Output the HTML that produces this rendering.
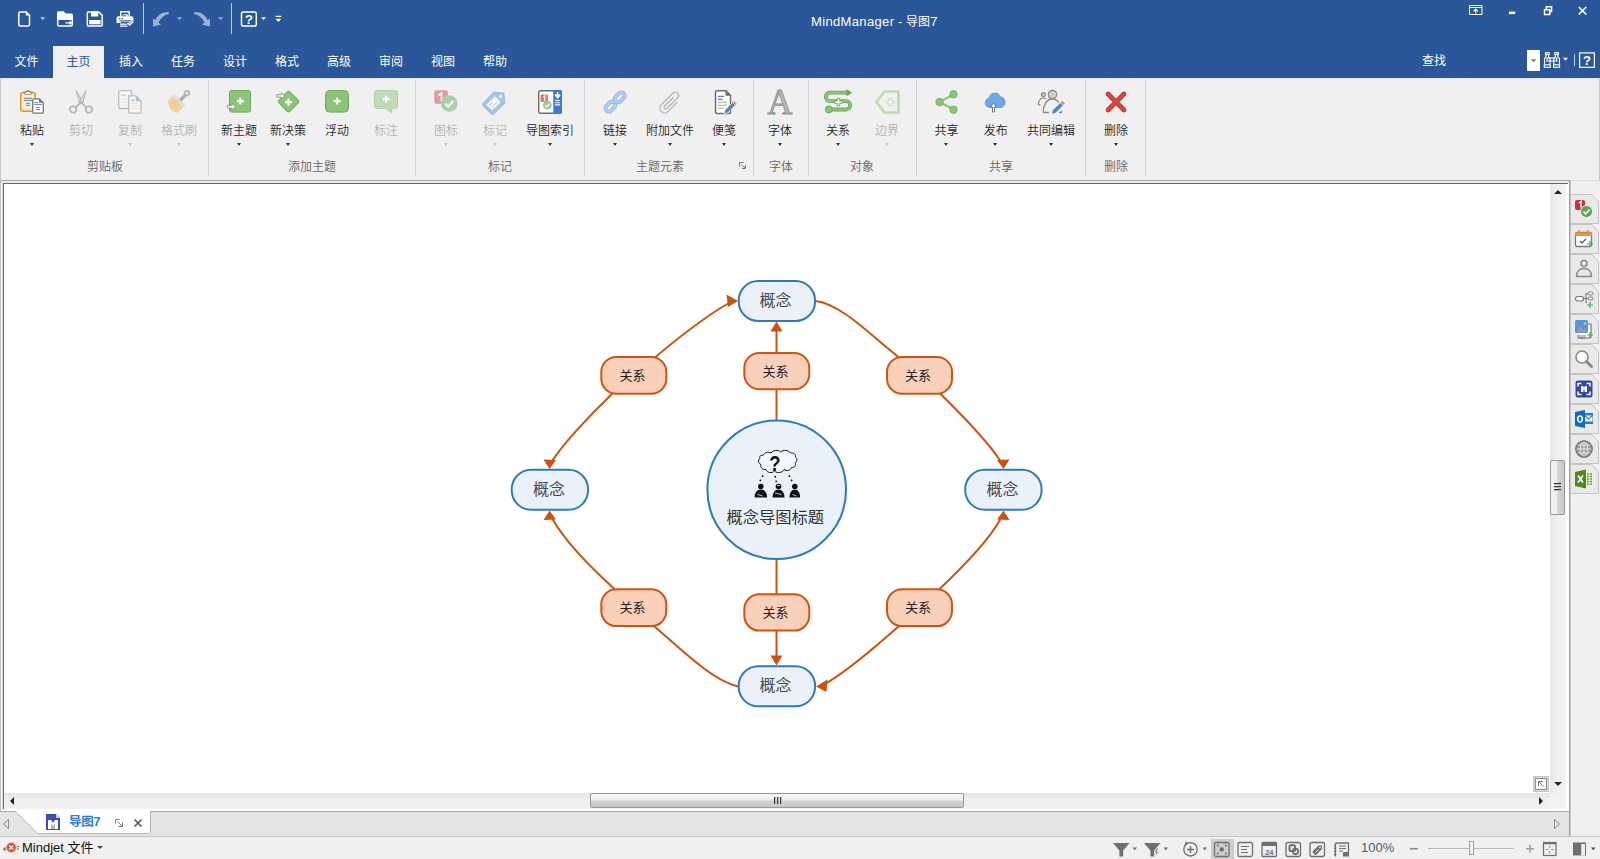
<!DOCTYPE html>
<html lang="zh-CN">
<head>
<meta charset="utf-8">
<title>MindManager - 导图7</title>
<style>
*{box-sizing:border-box;margin:0;padding:0}
html,body{width:1600px;height:859px;overflow:hidden;background:#f0f0f0}
body{font-family:"Liberation Sans","Noto Sans CJK SC",sans-serif;font-size:12px;color:#262626;position:relative}
.abs{position:absolute}
#titlebar{position:absolute;left:0;top:0;width:1600px;height:78px;background:#2b579a}
#apptitle{position:absolute;left:811px;top:12.700px;color:#fff;font-size:13px;line-height:18px;white-space:nowrap}
.tab{position:absolute;top:46px;height:32px;line-height:33px;color:#fff;font-size:12px;text-align:center;white-space:nowrap}
.tab.active{background:#f0f0f0;color:#2b579a}
#ribbon{position:absolute;left:0;top:78px;width:1600px;height:102px;background:#f0f0f0}
.rb{position:absolute;top:0;width:60px;margin-left:-30px;text-align:center;height:80px}
.rb .ic{position:absolute;left:50%;top:12px;margin-left:-12px;width:24px;height:24px}
.rb .lb{font-weight:350;position:absolute;left:-20px;right:-20px;top:43.500px;line-height:18px;font-size:12px;color:#262626;white-space:nowrap}
.rb .dd{position:absolute;left:50%;top:65px;margin-left:-2.500px;width:0;height:0;border-left:2.500px solid transparent;border-right:2.500px solid transparent;border-top:3px solid #333}
.rb.dis .lb{color:#b4b4b4}
.rb.dis .dd{border-top-color:#c4c4c4}
.gl{font-weight:350;position:absolute;top:79.500px;line-height:18px;font-size:12px;color:#666;text-align:center;width:100px;margin-left:-50px;white-space:nowrap}
.gs{position:absolute;top:2px;width:1px;height:96px;background:#d0d0d0}
#canvas{position:absolute;left:4px;top:184px;width:1546px;height:609px;background:#fff}
svg{display:block;overflow:visible}
.sbtab{position:absolute;left:1570px;width:30px;height:30px}
</style>
</head>
<body>
<!-- TITLE BAR -->
<div id="titlebar">
  <svg id="qat" class="abs" style="left:0;top:0" width="300" height="40" viewBox="0 0 300 40">
    <g fill="none" stroke="#fff" stroke-width="1.500" stroke-linejoin="round">
      <!-- new -->
      <path d="M20.300 12h6l3.200 3.200V24.500a1.500 1.500 0 0 1-1.500 1.500H20.300a1.500 1.500 0 0 1-1.500-1.500V13.500a1.500 1.500 0 0 1 1.500-1.500z"/>
      <!-- open -->
      <path d="M57.700 19.300h14.600V24.500a1.500 1.500 0 0 1-1.500 1.500H59.200a1.500 1.500 0 0 1-1.500-1.500z"/>
      <!-- save -->
      <path d="M88.300 12h10.500l3.400 3.400V25a1 1 0 0 1-1 1H88.300a1 1 0 0 1-1-1V13a1 1 0 0 1 1-1z"/>
      <!-- help box -->
      <rect x="241.500" y="12" width="14.800" height="14" rx="1.800"/>
    </g>
    <g fill="#fff">
      <path d="M25.800 11.600l4 4h-4z"/>
      <path d="M57 12.700a1.500 1.500 0 0 1 1.500-1.500h5.300l1.700 2.300h6a1.500 1.500 0 0 1 1.500 1.500v4.300H57z"/>
      <path d="M65.500 22.200h4v-1.700l2.800 2.400-2.800 2.400v-1.700h-4z"/>
      <rect x="91" y="11.500" width="7.300" height="5"/>
      <rect x="89.200" y="20" width="11.400" height="4.300"/>
      <!-- printer -->
      <path d="M120 16.500V12a1 1 0 0 1 1-1h8a1 1 0 0 1 1 1v4.500h-1.500V12.500h-7v4z"/>
      <path d="M122.500 15.800c1-2 3-2.500 4.500-1l.8-.8v2.500h-2.500l.8-.8c-1-1-2.200-.8-3 .4z"/>
      <path d="M118.500 16.300h13a2 2 0 0 1 2 2V23h-4.300v-1.200h-8.400V23h-4.300v-4.700a2 2 0 0 1 2-2zM119 18v1.200h1.500V18zm2.500 0v1.200h1.500V18z" fill-rule="evenodd"/>
      <path d="M119.500 20.300h11.500v1h-11.500z" fill="#2b579a"/>
      <path d="M120 23.600h8v1.200h-8zM120 25.600h7.500v1.200H120z"/>
      <path d="M126.800 23.500l1.400-1.400 1.500 1.500 2.800-2.800 1.400 1.400-4.200 4.200z" stroke="#2b579a" stroke-width=".7"/>
      <!-- help ? -->
      <text x="248.900" y="24.300" font-size="13.500" font-weight="bold" text-anchor="middle" font-family="'Liberation Sans',sans-serif">?</text>
      <path d="M261 17.200h5l-2.500 2.900z"/>
      <path d="M275.600 15.700h5.600v1.400h-5.600zM275.600 18.800h5.600l-2.800 3.200z"/>
    </g>
    <g fill="#c3d3ee"><path d="M40.200 17.200h5l-2.500 2.900z"/></g>
    <path d="M143.500 3v31M231.500 3v31" stroke="#b8c9e6" stroke-width="1"/>
    <!-- undo / redo (disabled) -->
    <g fill="#9bb1d8">
      <path d="M153 18.500L153 26.500 161 24.800 158.500 22.500C160.500 18 164 15 169 14L168.500 12C161.500 12 157.500 15.500 155.500 20z"/>
      <path d="M210 18.500L210 26.500 202 24.800 204.500 22.500C202.500 18 199 15 194 14L194.500 12C201.500 12 205.500 15.500 207.500 20z"/>
      <path d="M177 17.200h5l-2.500 2.900z"/><path d="M218.200 17.200h5l-2.500 2.900z"/>
    </g>
  </svg>
  <div id="apptitle"><span style="letter-spacing:.35px">MindManager</span> - <span style="font-size:12px;letter-spacing:.2px;position:relative;top:.8px">导图</span>7</div>
  <svg id="winbtns" class="abs" style="left:1460px;top:0" width="140" height="78" viewBox="1460 0 140 78">
    <g fill="none" stroke="#fff">
      <path d="M1469.500 5.500h12.500v9h-12.500zM1469.500 7.500h12.500" stroke-width="1"/>
      <path d="M1475.700 13.500V9.500M1473.500 11.300l2.200-2.200 2.200 2.200" stroke-width="1.100"/>
      <path d="M1509 12.800h6.200" stroke-width="2.600"/>
      <path d="M1544.500 9.800h5.300v4.700h-5.300zM1546.300 9.500V6.700h5.300v4.800h-1.600" stroke-width="1.400"/>
      <path d="M1578.800 7l7.400 7.400M1586.200 7l-7.400 7.400" stroke-width="1.500"/>
      <!-- binoculars -->
      <g stroke-width="1.100">
        <rect x="1545.500" y="52.700" width="3.600" height="1.800"/><rect x="1554.800" y="52.700" width="3.600" height="1.800"/>
        <path d="M1546 54.500v2.500l-1.500 1.500v6M1548.600 54.500v2.500l1.500 1.500v6M1555.300 54.500v2.500l-1.500 1.500v6M1557.900 54.500v2.500l1.500 1.500v6"/>
        <rect x="1544.300" y="64.800" width="6" height="2.500"/><rect x="1553.600" y="64.800" width="6" height="2.500"/>
        <rect x="1547" y="58" width="9.800" height="3"/>
      </g>
      <path d="M1574.500 54.500v11.500" stroke="#c3d3ee" stroke-width="1"/>
      <rect x="1579.600" y="52.900" width="14.800" height="14.400" stroke-width="1.200"/>
    </g>
    <rect x="1527" y="50" width="13" height="21" fill="#fff"/>
    <path d="M1531 59.300h5.200l-2.600 3z" fill="#777"/>
    <path d="M1563 57.800h5l-2.500 3z" fill="#fff"/>
    <text x="1587" y="64.800" font-size="13" font-weight="bold" fill="#fff" text-anchor="middle" font-family="'Liberation Sans',sans-serif">?</text>
  </svg>
  <div class="tab" style="left:0;width:53px">文件</div>
  <div class="tab active" style="left:53px;width:51px">主页</div>
  <div class="tab" style="left:105px;width:52px">插入</div>
  <div class="tab" style="left:157px;width:52px">任务</div>
  <div class="tab" style="left:209px;width:52px">设计</div>
  <div class="tab" style="left:261px;width:52px">格式</div>
  <div class="tab" style="left:313px;width:52px">高级</div>
  <div class="tab" style="left:365px;width:52px">审阅</div>
  <div class="tab" style="left:417px;width:52px">视图</div>
  <div class="tab" style="left:469px;width:52px">帮助</div>
  <div class="tab" style="left:1408px;width:52px;top:45.300px">查找</div>
</div>
<!-- RIBBON -->
<div id="ribbon">
<div class="abs" style="left:0;top:0;width:1600px;height:1px;background:#dfe6f1"></div><div class="abs" style="left:53px;top:0;width:51px;height:1px;background:#f0f0f0"></div>
<div class="abs" style="left:0;top:1px;width:1px;height:101px;background:#c9c9c9"></div><div class="abs" style="left:1599px;top:1px;width:1px;height:101px;background:#c6c6c6"></div><div class="abs" style="left:1571px;top:102px;width:29px;height:1px;background:#dcdcdc"></div>
<div class="rb" style="left:32px"><svg class="ic" width="24" height="24" viewBox="0 0 24 24"><rect x=".6" y="2.400" width="14.800" height="19" rx="2" fill="#f9cf74" stroke="#cf9a3a" stroke-width="1.200"/>
<rect x="2.400" y="4.600" width="11.200" height="14.800" rx=".8" fill="#ededed" stroke="#fbe6b5" stroke-width=".9"/>
<path d="M5 4.300V2.600a.8.800 0 0 1 .8-.8h.8a1.500 1.500 0 0 1 2.800 0h.8a.8.800 0 0 1 .8.800v1.700z" fill="#f0f0f0" stroke="#7c7c7c" stroke-width="1.100" stroke-linejoin="round"/>
<path d="M5.300 3.700h5.400" stroke="#fff" stroke-width="1"/>
<path d="M4 8.300h8M4 10.400h8M6.100 13.300h3.700M6.100 15.400h3.700" stroke="#7a7a7a" stroke-width="1"/>
<path d="M13.900 8.900h5.400l4 4V22a1.200 1.200 0 0 1-1.200 1.200H13.900a1.200 1.200 0 0 1-1.200-1.200V10.100a1.200 1.200 0 0 1 1.200-1.200z" fill="#fff" stroke="#757575" stroke-width="1.300"/>
<path d="M19 8.600v4.200h4.400z" fill="#757575"/>
<path d="M14.100 12.400h3.800M14.100 14.400h7.900" stroke="#5b7db8" stroke-width="1"/><path d="M16.200 17.400h3.700M16.200 19.500h3.700" stroke="#757575" stroke-width="1"/></svg><div class="lb">粘贴</div><div class="dd"></div></div>
<div class="rb dis" style="left:81px"><svg class="ic" width="24" height="24" viewBox="0 0 24 24"><g stroke="#b2b2b2" stroke-width="1.300" stroke-linejoin="round">
<path d="M12.600 13l4.900 4.300M11.400 13l-4.900 4.300" fill="none" stroke-width="1.600"/>
<path d="M7 .7L14.200 12.400 10.700 13.600z" fill="#e2e2e2" stroke-width="1"/><path d="M17 .7L9.800 12.400 13.300 13.600z" fill="#e2e2e2" stroke-width="1"/>
<circle cx="4.100" cy="19.500" r="3.200" fill="none" stroke-width="1.600"/><circle cx="19.900" cy="19.500" r="3.200" fill="none" stroke-width="1.600"/></g>
<circle cx="12" cy="12" r=".8" fill="#a0a0a0"/></svg><div class="lb">剪切</div></div>
<div class="rb dis" style="left:130px"><svg class="ic" width="24" height="24" viewBox="0 0 24 24"><g fill="#f8f8f8" stroke="#bababa" stroke-width="1.300">
<rect x=".7" y=".7" width="13" height="17.800" rx="1.800"/>
<path d="M10.700 5.900h7.300l5 5V21.800a1.400 1.400 0 0 1-1.400 1.400H12.100a1.400 1.400 0 0 1-1.400-1.400z"/></g>
<path d="M17.700 5.700v5.500h5.500z" fill="#bababa"/>
<path d="M3.300 5.200h4.500" stroke="#aab9d3" stroke-width="1"/><path d="M3.300 9h6.500M3.300 12h6.500M3.300 15h6.500" stroke="#dcdcdc" stroke-width=".9"/>
<path d="M12.800 10.200h4" stroke="#8ea6cc" stroke-width="1"/><path d="M12.800 13h7" stroke="#c9d3e6" stroke-width=".9"/><path d="M12.800 16h8.500M12.800 18.500h8.500" stroke="#ead9c8" stroke-width=".9"/></svg><div class="lb">复制</div><div class="dd"></div></div>
<div class="rb dis" style="left:179px"><svg class="ic" width="24" height="24" viewBox="0 0 24 24"><g opacity=".62">
<path d="M18.300 5.200L13 10.500" stroke="#8e8e8e" stroke-width="3.400" stroke-linecap="round"/>
<circle cx="20" cy="3.200" r="2.300" fill="#f0f0f0" stroke="#8e8e8e" stroke-width="1.700"/>
<path d="M7 4.800L17.800 15.200l-1.700 1.800L5.300 6.600z" fill="#dcdcdc" stroke="#b5b5b5" stroke-width=".6"/>
<path d="M5.200 6.600L16 17l-5.600 6.300-1.700-1.600-.4 1-2-2-.7.700-2-2.600-.9.200L1 11.200z" fill="#eebf5e"/>
<path d="M4.500 13.500c1-1.500 2.500-1.200 3 0M6.500 17.500c1-1.500 2.500-1.200 3 0M8.500 11.500c1-1.500 2.500-1.200 3 0" stroke="#d9a648" stroke-width=".8" fill="none"/></g></svg><div class="lb">格式刷</div><div class="dd"></div></div>
<div class="rb" style="left:239px"><svg class="ic" width="24" height="24" viewBox="0 0 24 24"><rect x="2.500" y=".6" width="21" height="21.500" rx="2.200" fill="#8cc47a" stroke="#6aa85a" stroke-width="1"/>
<path d="M9.900 10.100h2.300V7.800h2.200v2.300h2.300v2.200h-2.300v2.300h-2.200v-2.300H9.900z" fill="#fff"/>
<path d="M.3 15.300h4.500v-1.800l4 3.200-4 3.200v-1.800H.3z" fill="#fff" stroke="#8a8a8a" stroke-width=".9"/></svg><div class="lb">新主题</div><div class="dd"></div></div>
<div class="rb" style="left:288px"><svg class="ic" width="24" height="24" viewBox="0 0 24 24"><rect x="4.800" y="3.800" width="15.500" height="15.500" rx="2" fill="#8cc47a" stroke="#6aa85a" stroke-width="1" transform="rotate(45 12.500 11.600)"/>
<path d="M9 10.800h2.400V8.400h2.200v2.400H16V13h-2.400v2.400h-2.200V13H9z" fill="#fff" transform="translate(0,.2)"/>
<path d="M.8 4.800h4.500V3l3.800 3-3.800 3V7.200H.8z" fill="#fff" stroke="#8a8a8a" stroke-width=".9"/></svg><div class="lb">新决策</div><div class="dd"></div></div>
<div class="rb" style="left:337px"><svg class="ic" width="24" height="24" viewBox="0 0 24 24"><rect x=".6" y=".6" width="22.800" height="21.500" rx="4" fill="#8cc47a" stroke="#6aa85a" stroke-width="1"/>
<path d="M8.600 10h2.400V7.600h2.200V10h2.400v2.200h-2.400v2.400H11v-2.400H8.600z" fill="#fff"/></svg><div class="lb">浮动</div></div>
<div class="rb dis" style="left:386px"><svg class="ic" width="24" height="24" viewBox="0 0 24 24"><path d="M3 .5h18a2.500 2.500 0 0 1 2.500 2.500v13a2.500 2.500 0 0 1-2.500 2.500h-3.500V23l-5.500-4.500H3A2.500 2.500 0 0 1 .5 16V3A2.500 2.500 0 0 1 3 .5z" fill="#c2dbb7" stroke="#b4d0a8" stroke-width="1"/>
<path d="M8.600 8h2.400V5.600h2.200V8h2.400v2.200h-2.400v2.400H11v-2.400H8.600z" fill="#fff"/></svg><div class="lb">标注</div></div>
<div class="rb dis" style="left:446px"><svg class="ic" width="24" height="24" viewBox="0 0 24 24"><g opacity=".5"><rect x=".3" y=".3" width="13.500" height="13.500" rx="1.800" fill="#d8454d"/>
<path d="M4.500 5.500l3-2.300v8" stroke="#fff" stroke-width="2" fill="none"/>
<circle cx="15.300" cy="13.500" r="8.300" fill="#6aad5c"/>
<path d="M11.300 13.500l3 3.200 5-5.800" stroke="#fff" stroke-width="2.200" fill="none"/></g></svg><div class="lb">图标</div><div class="dd"></div></div>
<div class="rb dis" style="left:495px"><svg class="ic" width="24" height="24" viewBox="0 0 24 24"><g opacity=".55" transform="rotate(-45 12 12)"><path d="M1 6.500a2 2 0 0 1 2-2h15.500l6 7.500-6 7.500H3a2 2 0 0 1-2-2z" fill="#6ea2e0" stroke="#5a90d4" stroke-width="1"/>
<rect x="4" y="8" width="12" height="8" rx="1" fill="#fff"/><path d="M6 10.500h4" stroke="#888" stroke-width="1"/><path d="M6 13.500h8" stroke="#bbb" stroke-width="1"/>
<circle cx="20" cy="12" r="1.500" fill="#fff"/></g></svg><div class="lb">标记</div><div class="dd"></div></div>
<div class="rb" style="left:550px"><svg class="ic" width="24" height="24" viewBox="0 0 24 24"><rect x=".7" y=".7" width="22.600" height="22.600" rx="2" fill="#fff" stroke="#6a6a6a" stroke-width="1.400"/>
<path d="M15.300 0h6.700a2 2 0 0 1 2 2v20a2 2 0 0 1-2 2h-6.700z" fill="#3b78d0"/>
<path d="M19.600 2v5M17.300 5l2.300 3 2.300-3z" stroke="#fff" stroke-width="1.300" fill="#fff" stroke-linejoin="round"/>
<path d="M17 10.500h5.200M17 12.700h5.200M17 14.900h5.200" stroke="#fff" stroke-width="1.100"/>
<rect x="2.500" y="4.500" width="7.500" height="7.500" rx="1" fill="#e0747a"/><path d="M5.300 7l1.500-1v5" stroke="#fff" stroke-width="1.200" fill="none"/>
<circle cx="9.300" cy="15.200" r="4.400" fill="#9ccb90"/><path d="M7.200 15.200l1.600 1.700 2.700-3.100" stroke="#fff" stroke-width="1.300" fill="none"/></svg><div class="lb">导图索引</div><div class="dd"></div></div>
<div class="rb" style="left:615px"><svg class="ic" width="24" height="24" viewBox="0 0 24 24"><g fill="none" transform="rotate(-45 12 12)">
<rect x="-.15" y="8.600" width="11.300" height="6.800" rx="3.400" stroke="#8fb3de" stroke-width="3.900"/>
<rect x="-.15" y="8.600" width="11.300" height="6.800" rx="3.400" stroke="#aecdf2" stroke-width="2.500"/>
<rect x="12.850" y="8.600" width="11.300" height="6.800" rx="3.400" stroke="#8fb3de" stroke-width="3.900"/>
<rect x="12.850" y="8.600" width="11.300" height="6.800" rx="3.400" stroke="#aecdf2" stroke-width="2.500"/>
<path d="M7.200 8.600h.55a3.400 3.400 0 0 1 3.400 3.400" stroke="#8fb3de" stroke-width="3.900"/><path d="M6.700 8.600h1.050a3.400 3.400 0 0 1 3.400 3.400v.5" stroke="#aecdf2" stroke-width="2.500"/>
</g></svg><div class="lb">链接</div><div class="dd"></div></div>
<div class="rb" style="left:670px"><svg class="ic" width="24" height="24" viewBox="0 0 24 24"><path d="M19 12.500l-9 9a4.700 4.700 0 0 1-6.700-6.700L14.800 3.300a3.300 3.300 0 0 1 4.700 4.700L9 18.500a1.700 1.700 0 0 1-2.400-2.400l8.500-8.500" fill="none" stroke="#bcbcbc" stroke-width="1.500" stroke-linecap="round"/></svg><div class="lb">附加文件</div><div class="dd"></div></div>
<div class="rb" style="left:724px"><svg class="ic" width="24" height="24" viewBox="0 0 24 24"><path d="M5 .8h9l4.500 4.500V22a1.500 1.500 0 0 1-1.500 1.500H5A1.500 1.500 0 0 1 3.500 22V2.300A1.500 1.500 0 0 1 5 .8z" fill="#fff" stroke="#6e6e6e" stroke-width="1.500"/>
<path d="M13.500 .8v5h5z" fill="#6e6e6e"/>
<path d="M6 6.300h6M6 9.300h4.500" stroke="#4a86c8" stroke-width="1.200"/><path d="M6 12.300h9M6 15.300h9M6 18.300h6" stroke="#a8a8a8" stroke-width="1.100"/>
<path d="M12 23.800l1-3.800 7.500-7.500 2.800 2.800-7.500 7.500z" fill="#4a86c8" stroke="#f0f0f0" stroke-width=".8"/>
<path d="M20.500 12.500l1.500-1.500 2.800 2.800-1.500 1.500z" fill="#d6973c"/></svg><div class="lb">便笺</div><div class="dd"></div></div>
<div class="rb" style="left:780px"><svg class="ic" width="24" height="24" viewBox="0 0 24 24"><text x="12" y="23.800" font-family="'Liberation Serif',serif" font-size="35" text-anchor="middle" fill="#b9b9b9" stroke="#8f8f8f" stroke-width=".9">A</text></svg><div class="lb">字体</div><div class="dd"></div></div>
<div class="rb" style="left:838px"><svg class="ic" width="24" height="24" viewBox="0 0 24 24"><g fill="none"><path d="M3.500 19.500H20a4.200 4.200 0 0 0 0-8.400H4a4.200 4.200 0 0 1 0-8.400h17" stroke="#6aa85a" stroke-width="3.800"/>
<path d="M3.500 19.500H20a4.200 4.200 0 0 0 0-8.400H4a4.200 4.200 0 0 1 0-8.400h17" stroke="#8cc47a" stroke-width="2.200"/></g>
<path d="M20.500 -.8l5.800 3.500-5.800 3.500z" fill="#6aa85a"/>
<circle cx="2.800" cy="19.400" r="3.500" fill="#8cc47a" stroke="#6aa85a" stroke-width="1"/>
<path d="M8.600 10.900h2.600V8.300h2.400v2.600h2.600v2.400h-2.600v2.600h-2.400v-2.600H8.600z" fill="#fff" stroke="#6aa85a" stroke-width=".9"/></svg><div class="lb">关系</div><div class="dd"></div></div>
<div class="rb dis" style="left:887px"><svg class="ic" width="24" height="24" viewBox="0 0 24 24"><path d="M9.500 1.500h14v21h-14L1.500 12z" fill="none" stroke="#bfd9b3" stroke-width="2.600" stroke-linejoin="round"/>
<path d="M11.500 10.800h2.500V8.300h2.400v2.500h2.500v2.400h-2.500v2.500H14v-2.500h-2.500z" fill="#fff" stroke="#bfd9b3" stroke-width="1"/></svg><div class="lb">边界</div><div class="dd"></div></div>
<div class="rb" style="left:946.5px"><svg class="ic" width="24" height="24" viewBox="0 0 24 24"><path d="M4.500 12L18.500 4.500M4.500 12l14 7.500" stroke="#8cc47a" stroke-width="2.200" fill="none"/>
<g fill="#8cc47a" stroke="#6aa85a" stroke-width=".8"><circle cx="4.500" cy="12" r="3.700"/><circle cx="18.500" cy="4.300" r="3.700"/><circle cx="18.500" cy="19.700" r="3.700"/></g></svg><div class="lb">共享</div><div class="dd"></div></div>
<div class="rb" style="left:995.7px"><svg class="ic" width="24" height="24" viewBox="0 0 24 24"><path d="M5.500 17.500a4.600 4.600 0 0 1-.6-9.100 6 6 0 0 1 11.500-1.600 5.500 5.500 0 0 1 .8 10.700z" fill="#6ea8ea" stroke="#5c97dc" stroke-width=".8"/>
<path d="M8.500 22v-5H6.300l3.200-4 3.200 4H10.500v5z" fill="#fff" stroke="#6a6a6a" stroke-width=".9" stroke-linejoin="round"/></svg><div class="lb">发布</div><div class="dd"></div></div>
<div class="rb" style="left:1051px"><svg class="ic" width="24" height="24" viewBox="0 0 24 24"><g transform="translate(-1,0)"><circle cx="5.400" cy="4.600" r="2" fill="#cfcfcf" stroke="#8a8a8a" stroke-width="1.100"/>
<path d="M.5 15c0-4 1.500-7 4.900-7 1.200 0 2 .4 2.700 1" fill="none" stroke="#8a8a8a" stroke-width="1.200"/><path d="M.5 15h2" stroke="#8a8a8a" stroke-width="1.200"/>
<circle cx="14.500" cy="4.500" r="4.200" fill="#cfcfcf" stroke="#8a8a8a" stroke-width="1.200"/>
<path d="M5.200 22.500c0-7 3-13.500 9.300-13.500 3 0 5 1.500 6.300 3.500M5.200 22.500H11M21 22.500h2.500v-2" fill="none" stroke="#8a8a8a" stroke-width="1.300"/>
<path d="M14 23.800l1-3.600 7.300-7.300 2.600 2.600-7.300 7.300z" fill="#4a86c8"/>
<path d="M22.800 12.400l1.600-1.600 2.600 2.600-1.600 1.600z" fill="#c9973c"/></g></svg><div class="lb">共同编辑</div><div class="dd"></div></div>
<div class="rb" style="left:1116px"><svg class="ic" width="24" height="24" viewBox="0 0 24 24"><g fill="none" stroke-linecap="round"><path d="M4 4l16 16M20 4L4 20" stroke="#b9322d" stroke-width="4.600"/><path d="M4 4l16 16M20 4L4 20" stroke="#dc4640" stroke-width="3"/></g></svg><div class="lb">删除</div><div class="dd"></div></div>
<div class="gl" style="left:105px">剪贴板</div>
<div class="gl" style="left:312px">添加主题</div>
<div class="gl" style="left:500px">标记</div>
<div class="gl" style="left:660px">主题元素</div>
<div class="gl" style="left:781px">字体</div>
<div class="gl" style="left:862px">对象</div>
<div class="gl" style="left:1001px">共享</div>
<div class="gl" style="left:1116px">删除</div>
<div class="gs" style="left:208px"></div>
<div class="gs" style="left:415px"></div>
<div class="gs" style="left:584px"></div>
<div class="gs" style="left:753px"></div>
<div class="gs" style="left:808px"></div>
<div class="gs" style="left:916px"></div>
<div class="gs" style="left:1085px"></div>
<div class="gs" style="left:1145px"></div>
<svg class="abs" style="left:739px;top:84px" width="7" height="7" viewBox="0 0 7 7"><path d="M.5 4.500V.5H4.500M2.500 2.500l3.500 3.500M6.500 3V6.500H3" fill="none" stroke="#777" stroke-width="1"/></svg>
</div>
<!-- CANVAS FRAME -->
<div class="abs" style="left:0;top:180px;width:1570px;height:1px;background:#ababab"></div>
<div class="abs" style="left:0;top:181px;width:1569px;height:630px;background:#fff"></div>
<div class="abs" style="left:0;top:181px;width:1569px;height:2px;background:#e9e9e9"></div>
<div class="abs" style="left:0;top:180px;width:1px;height:632px;background:#bcbcbc"></div>
<div class="abs" style="left:2px;top:182px;width:1px;height:628px;background:#d9d9d9"></div>
<div class="abs" style="left:3px;top:183px;width:1565px;height:1px;background:#6a6a6a"></div>
<div class="abs" style="left:3px;top:183px;width:1px;height:626px;background:#6a6a6a"></div>
<div class="abs" style="left:1569px;top:180px;width:1px;height:657px;background:#a2a2a2"></div>
<div class="abs" style="left:1570px;top:180px;width:1px;height:657px;background:#c8c8c8"></div>
<div id="canvas">
</div>
<svg class="abs" style="left:0;top:0" width="1600" height="859" viewBox="0 0 1600 859" font-family="'Liberation Sans','Noto Sans CJK SC',sans-serif">
<g fill="none" stroke="#c9530f" stroke-width="2">
  <!-- center to top / bottom -->
  <path d="M776.5 421V389"/><path d="M776.5 353V330"/>
  <path d="M776.5 559V594"/><path d="M776.5 630V657"/>
  <!-- top-left -->
  <path d="M655.5 357C684 333 708 315 729 303"/>
  <path d="M612 394C589 416 562 445 551.500 462"/>
  <!-- top-right -->
  <path d="M816 301C842 305 868 333 898.5 357"/>
  <path d="M940.5 394C965 418 988 442 1000.5 461"/>
  <!-- bottom-left -->
  <path d="M614.5 589C588 565 565 541 552.5 519"/>
  <path d="M654 626C684 652 712 680 738 686.5"/>
  <!-- bottom-right -->
  <path d="M939.5 589C965 565 989 540 1000.5 519"/>
  <path d="M899 626C872 650 846 672 825 684"/>
</g>
<g fill="#c9530f">
  <path d="M776.5 321.5l6 10h-12z"/>
  <path d="M776.5 665.5l6-10h-12z"/>
  <path d="M738 301l-11.5-6.5l1.5 12.5z"/>
  <path d="M549.5 469l-6-9.500l12.500 0.500z"/>
  <path d="M1003.500 469l-6.500-9l12.500-0.500z"/>
  <path d="M549.5 510.500l-6 9.500l12.500-0.500z"/>
  <path d="M1003.500 510.500l-6.500 9l12.500 0.500z"/>
  <path d="M816 686.500l11.500-7l-1 12.500z"/>
</g>
<g fill="#eaf1f9" stroke="#2e7abd" stroke-width="2">
  <circle cx="776.700" cy="489.800" r="69.300"/>
  <rect x="738.700" y="281" width="76.400" height="40" rx="19.500"/>
  <rect x="511.700" y="469.800" width="76.400" height="40" rx="19.500"/>
  <rect x="965.200" y="469.800" width="76.400" height="40" rx="19.500"/>
  <rect x="738.700" y="666.300" width="76.400" height="40" rx="19.500"/>
</g>
<g fill="#fbd0bb" stroke="#cc5512" stroke-width="2">
  <rect x="601.300" y="357" width="65" height="36.800" rx="15"/>
  <rect x="744.300" y="353" width="65" height="36.300" rx="15"/>
  <rect x="887" y="357" width="65" height="36.800" rx="15"/>
  <rect x="601.300" y="589.300" width="65" height="36.800" rx="15"/>
  <rect x="744.300" y="594.300" width="65" height="36.300" rx="15"/>
  <rect x="887" y="589.300" width="65" height="36.800" rx="15"/>
</g>
<g font-size="13" fill="#222" text-anchor="middle">
  <text x="632.500" y="380.200">关系</text>
  <text x="775.500" y="375.900">关系</text>
  <text x="918" y="380.200">关系</text>
  <text x="632.500" y="612.400">关系</text>
  <text x="775.500" y="617.100">关系</text>
  <text x="918" y="612.400">关系</text>
</g>
<g font-size="16" fill="#4a4a4a" text-anchor="middle">
  <text x="775.500" y="305.700">概念</text>
  <text x="549" y="494.700">概念</text>
  <text x="1002.500" y="494.700">概念</text>
  <text x="775.500" y="691.200">概念</text>
</g>
<text x="775.300" y="523.400" font-size="16.300" fill="#333" text-anchor="middle">概念导图标题</text>
<!-- center icon -->
<g id="cicon" transform="translate(754,450)">
<path d="M9 5.500c1.500-3 5-4 8-2.500 2-3 7-3.500 9.500-1 3-2.500 8-2 10 1 3-.5 5.500 1.500 5 4 2 1.500 2 4.500-.5 5.500 1.500 2.500-.5 5.500-3.500 5-1 3-5 4-7.500 2-1.500 3.500-7 4-9.500 1.500-2.500 2.500-7.500 2-8.500-1.500-3.500 .5-6-2-5-5-3-1-3.500-4.500-1-6-1-2.500 1-4 3-3z" fill="#f5f8fc" stroke="#111" stroke-width="1" stroke-linejoin="round"/>
<text x="0" y="20.600" font-size="22.500" font-weight="bold" text-anchor="middle" fill="#111" font-family="'Liberation Sans',sans-serif" transform="translate(20.800,0) scale(.82,1)">?</text>
<path d="M9 25.500L5.500 32M21 26l1.500 6.500M35 25.500l3.500 6.500" stroke="#111" stroke-width="1.600" stroke-dasharray="1.600 3.200" fill="none"/>
<g fill="#111">
<circle cx="6.800" cy="36.500" r="2.800"/><path d="M.5 47.500c0-4.500 2.500-8 6.300-8s6.300 3.500 6.300 8z"/>
<circle cx="24.500" cy="36.500" r="2.800"/><path d="M18.500 47.500c0-4.500 2.500-8 6-8s6 3.500 6 8z"/>
<circle cx="40.800" cy="36.500" r="2.800"/><path d="M35.500 47.500c0-4.500 2-8 5.300-8s5.300 3.500 5.300 8z"/>
</g>
<path d="M3.500 44.500l5 1.500M21 43l6.500 1.500M38.500 44.500l4 1.500M23 35.500h3" stroke="#eaf1f9" stroke-width=".8" fill="none"/>
</g>
</svg>

<!-- SCROLLBARS -->
<div id="vscroll" class="abs" style="left:1550px;top:184px;width:16px;height:609px;background:linear-gradient(90deg,#e6e6e6,#f1f1f1 50%,#f3f3f3)">
  <div class="abs" style="left:4px;top:6px;width:0;height:0;border-left:4px solid transparent;border-right:4px solid transparent;border-bottom:4px solid #222"></div>
  <div class="abs" style="left:0;top:276px;width:15px;height:55px;border:1px solid #979797;border-radius:2px;background:linear-gradient(90deg,#f6f6f6,#ededed 45%,#d2d2d2 55%,#c9c9c9)">
    <div class="abs" style="left:3px;top:22px;width:7px;height:1px;background:#333;box-shadow:0 1px 0 #bbb,0 3px 0 #333,0 4px 0 #bbb,0 6px 0 #333,0 7px 0 #bbb"></div>
  </div>
  <div class="abs" style="left:4px;top:598px;width:0;height:0;border-left:4px solid transparent;border-right:4px solid transparent;border-top:4px solid #222"></div>
</div>
<div class="abs" style="left:1533px;top:776px;width:16px;height:16px;background:#d8d8d8;border:1px solid #c6c6c6">
  <div class="abs" style="left:1px;top:1px;width:12px;height:12px;background:#fff;border:1px solid #8f8f8f"></div>
  <svg class="abs" style="left:3px;top:3px" width="8" height="8" viewBox="0 0 8 8"><path d="M1.500 6V1.500H6M1.500 1.500L6.500 6.500" fill="none" stroke="#777" stroke-width="1"/></svg>
</div>
<div id="hscroll" class="abs" style="left:4px;top:793px;width:1546px;height:16px;background:linear-gradient(180deg,#e4e4e4,#f0f0f0 45%,#f2f2f2)">
  <div class="abs" style="left:6px;top:4px;width:0;height:0;border-top:4px solid transparent;border-bottom:4px solid transparent;border-right:4px solid #222"></div>
  <div class="abs" style="left:586px;top:0;width:374px;height:15px;border:1px solid #979797;border-radius:2px;background:linear-gradient(180deg,#f6f6f6,#ececec 45%,#d2d2d2 55%,#c8c8c8)">
    <div class="abs" style="left:183px;top:3px;width:1px;height:7px;background:#333;box-shadow:1px 0 0 #bbb,3px 0 0 #333,4px 0 0 #bbb,6px 0 0 #333,7px 0 0 #bbb"></div>
  </div>
  <div class="abs" style="left:1535px;top:4px;width:0;height:0;border-top:4px solid transparent;border-bottom:4px solid transparent;border-left:4px solid #222"></div>
</div>
<div class="abs" style="left:1550px;top:793px;width:16px;height:16px;background:#f3f3f3"></div>
<!-- DOC TAB BAR -->
<div class="abs" style="left:0;top:811px;width:1569px;height:1px;background:#a9a9a9"></div>
<div class="abs" style="left:0;top:812px;width:1569px;height:24px;background:#e4e4e4"></div>
<div class="abs" style="left:0;top:836px;width:1600px;height:1px;background:#c6c6c6"></div>
<svg class="abs" style="left:0;top:811px" width="1569" height="26" viewBox="0 0 1569 26">
  <path d="M15.500 0.500L37.500 22.500H148.500L150.500 20.500V0.500" fill="#fff" stroke="#b5b5b5"/>
  <path d="M16 0.500H150" stroke="#fff" stroke-width="1.500"/>
  <path d="M8.500 8.500V17.500L3.500 13z" fill="none" stroke="#8a8a8a"/>
  <path d="M1554.500 8.500V17.500L1559.500 13z" fill="none" stroke="#8a8a8a"/>
  <!-- doc icon -->
  <path d="M46 3h10l4 4v12H46z" fill="#3c50b4"/>
  <path d="M56 3l4 4h-4z" fill="#c9d0f0"/>
  <path d="M48 9h3l2 3 2-3h3v9H48z" fill="#fff"/>
  <path d="M51 12l2 3 2-3v6h-4z" fill="#b5b5b5"/>
  <!-- pin -->
  <path d="M115.500 12.500V8.500H119.500M117.500 10.500L122 15M122.500 11.500V15.500H118.500" fill="none" stroke="#777" stroke-width="1"/>
  <!-- close -->
  <path d="M134.500 8.500L141.500 15.500M141.500 8.500L134.500 15.500" stroke="#555" stroke-width="1.600" fill="none"/>
</svg>
<div class="abs" style="left:69px;top:813px;font-size:12.500px;font-weight:bold;color:#2b7cd3;line-height:18px;letter-spacing:-.3px">导图7</div>
<!-- STATUS BAR -->
<div id="status" class="abs" style="left:0;top:837px;width:1600px;height:22px;background:#f0f0f0">
  <svg class="abs" style="left:0;top:0" width="1600" height="22" viewBox="0 837 1600 22">
    <!-- mindjet icon -->
    <circle cx="11.300" cy="847.500" r="4.800" fill="#e2492f" stroke="#f3a38f" stroke-width="1"/>
    <path d="M9.300 845.500l4 4M13.300 845.500l-4 4" stroke="#fff" stroke-width="1.300"/>
    <path d="M3 848.500l2.500-1.500v3z" fill="#4c8a2a"/><path d="M3 850h3" stroke="#4c8a2a" stroke-width="1"/>
    <path d="M17 846.500h2M17 849h2" stroke="#4c8a2a" stroke-width="1"/>
    <!-- filters -->
    <g fill="#6f6f6f">
      <path d="M1113 843h16.500l-6.300 7.500v6h-3.800v-6z"/>
      <path d="M1132.500 847.500h4.600l-2.300 2.800z"/>
      <path d="M1144 843h16.500l-6.300 7.500v6h-3.800v-6z"/>
      <path d="M1157 848l-3 4.500h2.200l-1.700 4 4.500-5h-2.300l2-3.500z" stroke="#f0f0f0" stroke-width=".7"/>
      <path d="M1163.500 847.500h4.600l-2.300 2.800z"/>
      <path d="M1202.500 847.500h4.600l-2.300 2.800z"/>
      <path d="M1209.500 847.500h4.600l-2.300 2.800z" transform="translate(-200,0)" opacity="0"/>
    </g>
    <circle cx="1190.500" cy="849.300" r="6.700" fill="none" stroke="#6f6f6f" stroke-width="1.300"/>
    <path d="M1190.500 846v7M1187 849.500h7" stroke="#6f6f6f" stroke-width="1.500"/>
    <path d="M1184.600 845l1.200-3.800 2.800 2.600z" fill="#6f6f6f"/>
    <!-- view buttons -->
    <rect x="1211" y="839" width="23" height="20" fill="#cdcdcd"/>
    <g fill="none" stroke="#6f6f6f" stroke-width="1.300">
      <rect x="1214.500" y="842.500" width="14.500" height="14" rx="1.500"/>
      <rect x="1238" y="842.500" width="14.500" height="14" rx="1.500"/>
      <rect x="1262" y="842.500" width="14.500" height="14" rx="1"/>
      <rect x="1286" y="842.500" width="14.500" height="14" rx="2"/>
      <rect x="1310" y="842.500" width="14.500" height="14" rx="2"/>
      <path d="M1335.500 843v13.500M1335.500 843h13v10M1334 845.500h2M1334 848.500h2M1334 851.500h2M1334 854.500h2"/>
    </g>
    <g fill="#6f6f6f">
      <circle cx="1221.800" cy="849.500" r="2.200"/><circle cx="1217.800" cy="845.500" r="1"/><circle cx="1225.800" cy="845.500" r="1"/><circle cx="1217.800" cy="853.500" r="1"/><circle cx="1225.800" cy="853.500" r="1"/>
      <path d="M1262 842.500h14.500v3.500H1262z"/>
      <rect x="1289.500" y="845.300" width="5.600" height="5.600" rx="1.500" fill="none" stroke="#6f6f6f" stroke-width="2"/><rect x="1293" y="849" width="5" height="5" rx="1.500" fill="none" stroke="#6f6f6f" stroke-width="1.800"/>
      <path d="M1312.800 851.200l5.700-5.700h3.500v3.500l-5.700 5.700a1 1 0 0 1-1.400 0l-2.100-2.100a1 1 0 0 1 0-1.400z"/>
      <path d="M1343 852h6v4.500h-6z"/>
    </g>
    <path d="M1241 846.500h8M1241 849.500h6M1241 852.500h7" stroke="#6f6f6f" stroke-width="1.100"/>
    <path d="M1339 846h7M1339 848.500h7M1339 851h4" stroke="#6f6f6f" stroke-width="1"/>
    <text x="1269.300" y="855" font-size="7.500" font-weight="bold" fill="#6f6f6f" text-anchor="middle" font-family="'Liberation Sans',sans-serif">24</text>
    <circle cx="1320" cy="847.500" r=".9" fill="#f0f0f0"/><path d="M1315.500 852.500l3-3" stroke="#f0f0f0" stroke-width="1"/>
    <!-- zoom -->
    <path d="M1410 848.700h8" stroke="#8a8a8a" stroke-width="1.600"/>
    <path d="M1428 848.500h86" stroke="#b9b9b9" stroke-width="1"/>
    <rect x="1469.500" y="841.500" width="4" height="13" fill="#f4f4f4" stroke="#a0a0a0"/>
    <path d="M1526 848.700h8M1530 844.700v8" stroke="#a0a0a0" stroke-width="1.600"/>
    <rect x="1543.500" y="842.500" width="12.500" height="13" fill="none" stroke="#6f6f6f" stroke-width="1.200"/>
    <path d="M1543.500 843.500h12.500" stroke="#6f6f6f" stroke-width="1.500"/>
    <path d="M1549.800 845.500v8M1545.800 849.500h8" stroke="#8a8a8a" stroke-width="1" stroke-dasharray="2.500 3"/>
    <path d="M1573 842.500h13v13h-13z" fill="#6f6f6f"/><path d="M1581.500 844h3.500v11.500h-3.500z" fill="#f0f0f0"/><path d="M1581.500 844h1.200v11.500h-1.200z" fill="#f0f0f0"/>
    <path d="M1591 847.500h4.600l-2.300 2.800z" fill="#444"/>
  </svg>
  <div class="abs" style="left:22px;top:2px;font-size:13px;line-height:18px;color:#111;white-space:nowrap">Mindjet 文件</div>
  <div class="abs" style="left:97px;top:9px;width:0;height:0;border-left:3px solid transparent;border-right:3px solid transparent;border-top:3px solid #444"></div>
  <div class="abs" style="left:1361px;top:2px;font-size:13px;line-height:18px;color:#5a5a5a;white-space:nowrap">100%</div>
</div>
<!-- RIGHT SIDEBAR -->
<svg class="abs" style="left:1570px;top:190px" width="30" height="310" viewBox="1570 190 30 310">
<path d="M1570.500 194.5H1591.500L1598.500 201.5V223.5H1570.500z" fill="#e9e9e9" stroke="#c4c4c4"/>
<g transform="translate(1574,199)"><rect x="1" y="1" width="10" height="10" rx="2" fill="#c8323c"/><path d="M5 4l2-1.500v6" stroke="#fff" stroke-width="1.400" fill="none"/><circle cx="12.500" cy="12.500" r="6" fill="#5aa552" stroke="#f0f0f0" stroke-width="1"/><path d="M9.500 12.500l2.200 2.300 3.800-4.300" stroke="#fff" stroke-width="1.800" fill="none"/></g>
<path d="M1570.500 224.5H1591.500L1598.500 231.5V253.5H1570.500z" fill="#e9e9e9" stroke="#c4c4c4"/>
<g transform="translate(1574,229)"><rect x="1.500" y="3.500" width="16" height="14" rx="1.500" fill="#fff" stroke="#777" stroke-width="1.300"/><path d="M1 3.500h17v3.500H1z" fill="#e8923a"/><path d="M5 1v4M14 1v4" stroke="#e8923a" stroke-width="1.600"/><path d="M6 12l2 2 4-4" stroke="#666" stroke-width="1.500" fill="none"/><path d="M16 12v6M13 15h6" stroke="#4fa84a" stroke-width="1.200"/></g>
<path d="M1570.500 254.5H1591.500L1598.500 261.5V283.5H1570.500z" fill="#e9e9e9" stroke="#c4c4c4"/>
<g transform="translate(1574,259)"><circle cx="10" cy="4.500" r="3" fill="none" stroke="#888" stroke-width="1.500"/><path d="M2.500 17.500c0-5 3-8 7.500-8s7.500 3 7.500 8z" fill="none" stroke="#888" stroke-width="1.500" stroke-linejoin="round"/></g>
<path d="M1570.500 284.5H1591.500L1598.500 291.5V313.5H1570.500z" fill="#e9e9e9" stroke="#c4c4c4"/>
<g transform="translate(1574,289)"><rect x="1.500" y="7.500" width="8" height="4.500" rx="2.200" fill="#fff" stroke="#777" stroke-width="1.200"/><path d="M9.500 9.500h2.500M12 4.500v9M12 4.500h2M12 9.500h2M12 13.500h1" stroke="#777" stroke-width="1.100" fill="none"/><rect x="14" y="3" width="5" height="3" rx="1.500" fill="#fff" stroke="#777"/><rect x="14" y="8" width="5" height="3" rx="1.500" fill="#fff" stroke="#777"/><path d="M16 13v6M13 16h6" stroke="#4fa84a" stroke-width="1.200"/></g>
<path d="M1570.500 314.5H1591.500L1598.500 321.5V343.5H1570.500z" fill="#e9e9e9" stroke="#c4c4c4"/>
<g transform="translate(1574,319)"><path d="M5 5h12v12a2 2 0 0 1-2 2H5" fill="#fff" stroke="#777" stroke-width="1.200"/><path d="M3 17h9M3 19h8" stroke="#777" stroke-width="1.100"/><rect x="1" y="1" width="13" height="13" rx="1.500" fill="#5b93d6"/><path d="M2.500 13l4-6 3 4 1.500-1.500 2.500 3.500z" fill="#9a9a9a"/><circle cx="11" cy="4.500" r="1.300" fill="#a9c8ee"/><path d="M16 13v6M13 16h6" stroke="#4fa84a" stroke-width="1.200"/></g>
<path d="M1570.500 344.5H1591.500L1598.500 351.5V373.5H1570.500z" fill="#e9e9e9" stroke="#c4c4c4"/>
<g transform="translate(1574,349)"><circle cx="8" cy="8" r="6" fill="#fff" stroke="#8a8a8a" stroke-width="1.600"/><path d="M12.500 12.500l5 5" stroke="#8a8a8a" stroke-width="3" stroke-linecap="round"/></g>
<path d="M1570.500 374.5H1591.500L1598.500 381.5V403.5H1570.500z" fill="#e9e9e9" stroke="#c4c4c4"/>
<g transform="translate(1574,379)"><rect x="1.500" y="1.500" width="17" height="17" rx="2.500" fill="#3346a8"/><path d="M4 7.500V4.500h3.500M12.500 4.500H16v3M16 12.500v3h-3.500M7.500 15.500H4v-3" fill="none" stroke="#fff" stroke-width="1.500"/><path d="M7 7h2l1 1.500L11 7h2v6H7z" fill="#fff"/><path d="M9 9.500l1 1.500 1-1.500V13H9z" fill="#8a94c8"/></g>
<path d="M1570.500 404.5H1591.500L1598.500 411.5V433.5H1570.500z" fill="#e9e9e9" stroke="#c4c4c4"/>
<g transform="translate(1574,409)"><rect x="8" y="4" width="11" height="11" fill="#2a7bd0"/><rect x="10.500" y="6.500" width="8" height="6" fill="#fff"/><path d="M10.500 6.500l4 3.500 4-3.500" fill="none" stroke="#2a7bd0" stroke-width="1.200"/><path d="M1 3l10-2v18l-10-2z" fill="#0f6cc6"/><ellipse cx="6" cy="10" rx="2.300" ry="3" fill="none" stroke="#fff" stroke-width="1.500"/></g>
<path d="M1570.500 434.5H1591.500L1598.500 441.5V463.5H1570.500z" fill="#e9e9e9" stroke="#c4c4c4"/>
<g transform="translate(1574,439)"><circle cx="10" cy="10" r="8" fill="#9a9a9a" stroke="#808080" stroke-width="1.500"/><path d="M2 10h16M3.500 6h13M3.500 14h13M10 2v16M10 2c-5 3-5 13 0 16M10 2c5 3 5 13 0 16" fill="none" stroke="#ececec" stroke-width="1"/><circle cx="10" cy="10" r="8" fill="none" stroke="#808080" stroke-width="1.500"/></g>
<path d="M1570.500 464.5H1591.500L1598.500 471.5V493.5H1570.500z" fill="#e9e9e9" stroke="#c4c4c4"/>
<g transform="translate(1574,469)"><path d="M12 3.500h7v13h-7z" fill="#f0f0f0"/><path d="M13 5h2M16 5h2M13 7.500h2M16 7.500h2M13 10h2M16 10h2M13 12.500h2M16 12.500h2M13 15h2M16 15h2" stroke="#6a9a2a" stroke-width="1.300"/><path d="M1 3l11-2.500v19L1 17z" fill="#4c8a1c"/><path d="M4 6.500l5 7M9 6.500l-5 7" stroke="#fff" stroke-width="1.700"/></g>
</svg>
</body>
</html>
